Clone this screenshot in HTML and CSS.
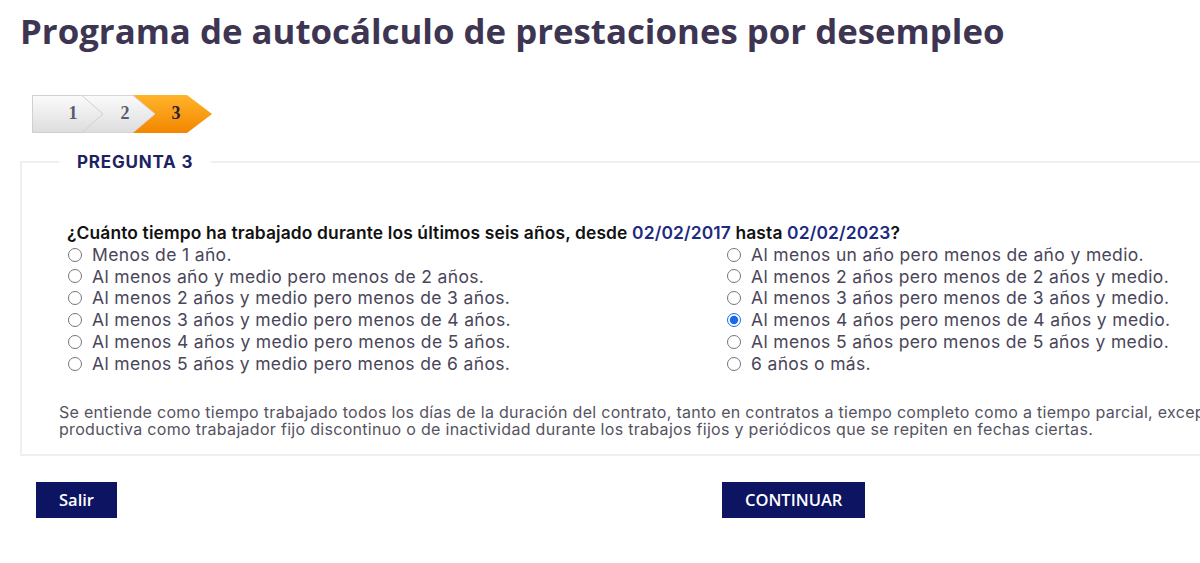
FILE: index.html
```html
<!DOCTYPE html>
<html lang="es">
<head>
  <meta charset="UTF-8">
  <title>Programa de autocálculo de prestaciones por desempleo</title>
  <link rel="stylesheet" href="styles.css">
</head>
<body>
  <div class="page">
    <h1 class="title">Programa de autocálculo de prestaciones por desempleo</h1>

    <svg class="steps" width="182" height="38" viewBox="0 0 182 38">
      <defs>
        <linearGradient id="stepGray" x1="0" y1="0" x2="0" y2="1">
          <stop offset="0" stop-color="#fbfbfb"/>
          <stop offset="1" stop-color="#dddddf"/>
        </linearGradient>
        <linearGradient id="stepOrange" x1="0" y1="0" x2="0" y2="1">
          <stop offset="0" stop-color="#ffb42a"/>
          <stop offset="1" stop-color="#f38600"/>
        </linearGradient>
      </defs>
      <polygon points="100,0 155,0 180,19 155,38 100,38" fill="url(#stepOrange)"/>
      <polygon points="48,0.5 101,0.5 123,19 101,37.5 48,37.5" fill="url(#stepGray)" stroke="#d6d6d8"/>
      <polygon points="0.5,0.5 50,0.5 71,19 50,37.5 0.5,37.5" fill="url(#stepGray)" stroke="#d0d0d2"/>
      <text class="step-num" x="41" y="24">1</text>
      <text class="step-num" x="93" y="24">2</text>
      <text class="step-num current" x="144" y="24">3</text>
    </svg>

    <fieldset class="question-box">
      <legend>PREGUNTA 3</legend>

      <p class="question">¿Cuánto tiempo ha trabajado durante los últimos seis años, desde <span class="date">02/02/2017</span> hasta <span class="date">02/02/2023</span>?</p>

      <div class="options">
        <div class="col">
          <label class="option"><input type="radio" name="tiempo">Menos de 1 año.</label>
          <label class="option"><input type="radio" name="tiempo">Al menos año y medio pero menos de 2 años.</label>
          <label class="option"><input type="radio" name="tiempo">Al menos 2 años y medio pero menos de 3 años.</label>
          <label class="option"><input type="radio" name="tiempo">Al menos 3 años y medio pero menos de 4 años.</label>
          <label class="option"><input type="radio" name="tiempo">Al menos 4 años y medio pero menos de 5 años.</label>
          <label class="option"><input type="radio" name="tiempo">Al menos 5 años y medio pero menos de 6 años.</label>
        </div>
        <div class="col">
          <label class="option"><input type="radio" name="tiempo">Al menos un año pero menos de año y medio.</label>
          <label class="option"><input type="radio" name="tiempo">Al menos 2 años pero menos de 2 años y medio.</label>
          <label class="option"><input type="radio" name="tiempo">Al menos 3 años pero menos de 3 años y medio.</label>
          <label class="option"><input type="radio" name="tiempo" checked>Al menos 4 años pero menos de 4 años y medio.</label>
          <label class="option"><input type="radio" name="tiempo">Al menos 5 años pero menos de 5 años y medio.</label>
          <label class="option"><input type="radio" name="tiempo">6 años o más.</label>
        </div>
      </div>

      <p class="note">Se entiende como tiempo trabajado todos los días de la duración del contrato, tanto en contratos a tiempo completo como a tiempo parcial, excepto los periodos de inactividad<br>productiva como trabajador fijo discontinuo o de inactividad durante los trabajos fijos y periódicos que se repiten en fechas ciertas.</p>
    </fieldset>

    <div class="actions">
      <div><button class="btn">Salir</button></div>
      <div><button class="btn">CONTINUAR</button></div>
    </div>
  </div>
</body>
</html>
```

FILE: styles.css
```css
body {
  margin: 0;
  background: #ffffff;
  font-family: Inter, "Noto Sans", sans-serif;
  overflow: hidden;
}

.page {
  width: 1700px;
  padding-top: 7px;
}

.title {
  margin: 0 0 0 20px;
  font-family: "Open Sans", sans-serif;
  font-size: 34.8px;
  line-height: 48px;
  font-weight: 700;
  color: #3d3552;
}

.steps {
  display: block;
  margin: 40px 0 0 32px;
}

.step-num {
  font-family: "Liberation Serif", serif;
  font-size: 18px;
  font-weight: 700;
  fill: #5b5a6c;
  text-anchor: middle;
}

.step-num.current {
  fill: #2b2233;
}

.question-box {
  margin: 19px 0 0 20px;
  padding: 0 0 16px 37px;
  border: 2px solid #efefef;
  width: 1600px;
}

.question-box legend {
  padding: 0 18px;
  font-size: 17px;
  line-height: 20px;
  font-weight: 700;
  letter-spacing: 0.8px;
  color: #1d2262;
}

.question {
  margin: 50px 0 0 8px;
  font-size: 17.4px;
  line-height: 21.8px;
  font-weight: 600;
  letter-spacing: 0.14px;
  color: #111111;
}

.date {
  color: #1c2b82;
}

.options {
  display: grid;
  grid-template-columns: 659px auto;
  margin-left: 9px;
}

.option {
  display: flex;
  align-items: center;
  font-size: 17.5px;
  line-height: 21.8px;
  letter-spacing: 0.35px;
  color: #4a4659;
}

.option input {
  width: 14px;
  height: 14px;
  margin: 0 10px 0 0;
  accent-color: #1769e8;
}

.note {
  margin: 29px 0 0 0;
  font-size: 16px;
  line-height: 17px;
  letter-spacing: 0.3px;
  color: #55535f;
}

.actions {
  display: grid;
  grid-template-columns: 686px auto;
  margin: 26px 0 0 36px;
}

.btn {
  height: 36px;
  padding: 0 23px;
  border: none;
  background: #0d1461;
  color: #ffffff;
  font-family: "Open Sans", sans-serif;
  font-size: 16.5px;
  font-weight: 600;
  cursor: pointer;
}
```
